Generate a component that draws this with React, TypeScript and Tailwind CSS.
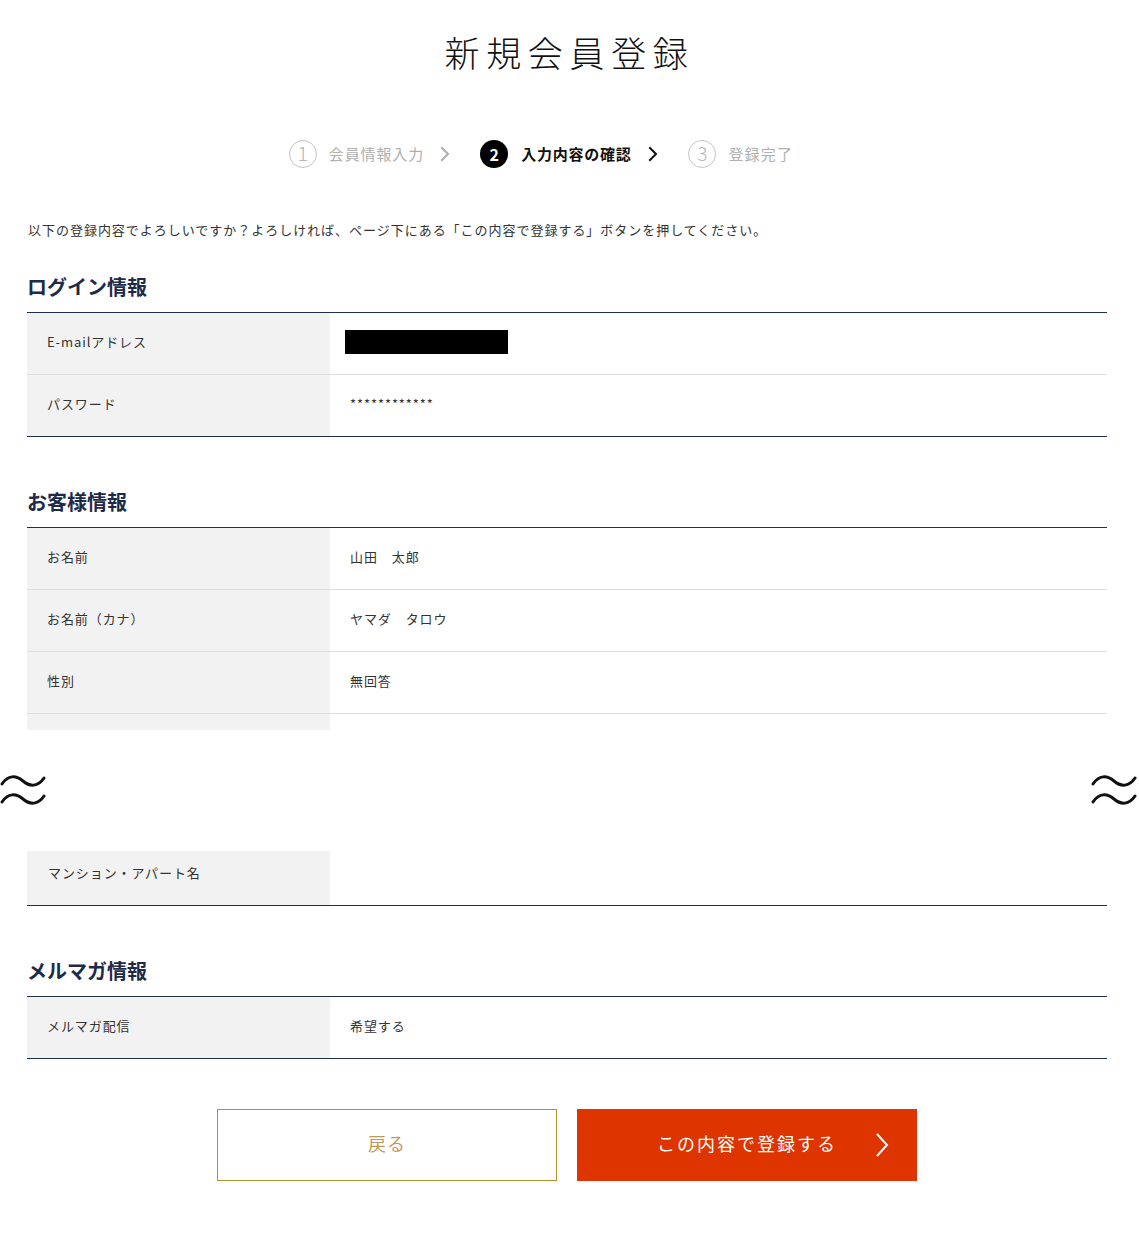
const jp = "font-['Noto_Sans_CJK_JP','Noto_Sans',sans-serif]";

type Row = { label: string; value?: string; kind?: "redacted" };

const loginRows: Row[] = [
  { label: "E-mailアドレス", kind: "redacted" },
  { label: "パスワード", value: "************" },
];

const customerRows: Row[] = [
  { label: "お名前", value: "山田　太郎" },
  { label: "お名前（カナ）", value: "ヤマダ　タロウ" },
  { label: "性別", value: "無回答" },
];

function Chevron({ color, width = 2 }: { color: string; width?: number }) {
  return (
    <svg width="10" height="16" viewBox="0 0 10 16" fill="none">
      <path d="M2 2 L8 8 L2 14" stroke={color} strokeWidth={width} strokeLinecap="square" />
    </svg>
  );
}

function Wave() {
  return (
    <svg width="46" height="36" viewBox="0 0 46 36" fill="none">
      <path d="M2 12 C8 3, 16 3, 23 9 C30 15, 38 15, 44 6" stroke="#111" strokeWidth="3" strokeLinecap="round" />
      <path d="M2 30 C8 21, 16 21, 23 27 C30 33, 38 33, 44 24" stroke="#111" strokeWidth="3" strokeLinecap="round" />
    </svg>
  );
}

function Steps() {
  return (
    <div className="flex items-center justify-center pr-[57px] mt-[63px]">
      <div className="flex items-center">
        <span className="w-[28px] h-[28px] rounded-full border border-[#c4c4c4] flex items-center justify-center pb-[3px] text-[19px] font-light text-[#b5b5b5] leading-none">
          1
        </span>
        <span className="ml-[12px] text-[15px] tracking-[0.06em] text-[#b0b0b0]">会員情報入力</span>
        <span className="ml-[16px]">
          <Chevron color="#adadad" />
        </span>
      </div>
      <div className="flex items-center ml-[30px]">
        <span className="w-[28px] h-[28px] rounded-full bg-black flex items-center justify-center text-[16px] font-bold text-white leading-none">
          2
        </span>
        <span className="ml-[13px] text-[15px] font-bold tracking-[0.05em] text-[#111]">入力内容の確認</span>
        <span className="ml-[17px]">
          <Chevron color="#111" />
        </span>
      </div>
      <div className="flex items-center ml-[30px]">
        <span className="w-[28px] h-[28px] rounded-full border border-[#c4c4c4] flex items-center justify-center pb-[3px] text-[19px] font-light text-[#b5b5b5] leading-none">
          3
        </span>
        <span className="ml-[12px] text-[15px] tracking-[0.08em] text-[#b0b0b0]">登録完了</span>
      </div>
    </div>
  );
}

function SectionHeading({ children, className = "" }: { children: string; className?: string }) {
  return (
    <h2 className={`text-[20px] leading-[30px] font-bold text-[#1d2b4a] mb-[10px] ${className}`}>{children}</h2>
  );
}

function InfoRow({ row, last }: { row: Row; last?: boolean }) {
  return (
    <div className={`flex ${last ? "h-[61px]" : "h-[62px] border-b border-[#dedede]"}`}>
      <div className="w-[303px] bg-[#f2f2f2] flex items-center pl-[20px] pb-[3px] text-[13px] tracking-[0.07em] text-[#333]">
        {row.label}
      </div>
      <div className="flex-1 flex items-center pl-[20px] pb-[3px] text-[13px] tracking-[0.07em] text-[#333]">
        {row.kind === "redacted" ? (
          <div className="w-[163px] h-[24px] bg-black -ml-[5px]" />
        ) : (
          row.value
        )}
      </div>
    </div>
  );
}

export default function App() {
  return (
    <div className={`w-full min-h-[1239px] bg-white ${jp}`}>
      <h1 className="pt-[26px] text-center text-[35px] leading-[51px] font-light tracking-[0.19em] text-[#111]">
        新規会員登録
      </h1>

      <Steps />

      <div className="w-[1080px] ml-[27px]">
        <p className="mt-[52px] text-[13px] leading-[20px] tracking-[0.075em] text-[#333] pl-[1px]">
          以下の登録内容でよろしいですか？よろしければ、ページ下にある「この内容で登録する」ボタンを押してください。
        </p>

        <SectionHeading className="mt-[32px]">ログイン情報</SectionHeading>
        <div className="border-t border-b border-[#1e2f4f]">
          {loginRows.map((r, i) => (
            <InfoRow key={r.label} row={r} last={i === loginRows.length - 1} />
          ))}
        </div>

        <SectionHeading className="mt-[50px]">お客様情報</SectionHeading>
        <div className="border-t border-[#1e2f4f]">
          {customerRows.map((r) => (
            <InfoRow key={r.label} row={r} />
          ))}
          <div className="flex h-[16px]">
            <div className="w-[303px] bg-[#f2f2f2]" />
          </div>
        </div>
      </div>

      <div className="flex justify-between pr-[2px] mt-[42px]">
        <Wave />
        <Wave />
      </div>

      <div className="w-[1080px] ml-[27px]">
        <div className="mt-[43px] flex h-[55px] border-b border-[#1e2f4f]">
          <div className="w-[303px] bg-[#f2f2f2] flex items-center pl-[21px] pb-[11px] text-[13px] tracking-[0.07em] text-[#333]">
            マンション・アパート名
          </div>
          <div className="flex-1" />
        </div>

        <SectionHeading className="mt-[50px]">メルマガ情報</SectionHeading>
        <div className="border-t border-b border-[#1e2f4f]">
          <InfoRow row={{ label: "メルマガ配信", value: "希望する" }} last />
        </div>

        <div className="flex justify-center gap-[20px] mt-[50px]">
          <button className="w-[340px] h-[72px] border border-[#b8902c] bg-white pb-[3px] text-[18px] tracking-[0.06em] text-[#c09a5c] flex items-center justify-center">
            戻る
          </button>
          <button className="relative w-[340px] h-[72px] border border-[#dd3400] bg-[#dd3400] pb-[3px] text-[18px] tracking-[0.11em] text-white flex items-center justify-center">
            この内容で登録する
            <span className="absolute right-[26px] top-1/2 -translate-y-1/2">
              <svg width="16" height="26" viewBox="0 0 16 26" fill="none">
                <path d="M3 2 L13 13 L3 24" stroke="#fff" strokeWidth="2" />
              </svg>
            </span>
          </button>
        </div>
      </div>
    </div>
  );
}
